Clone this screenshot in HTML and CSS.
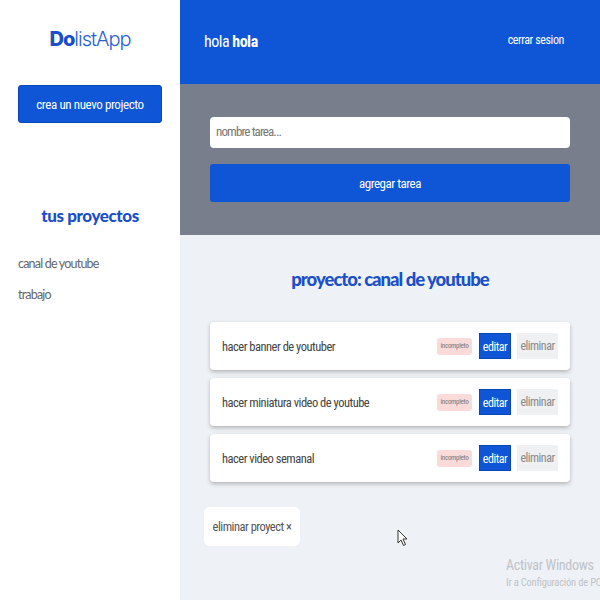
FILE: index.html
```html
<!DOCTYPE html>
<html>
<head>
<meta charset="utf-8">
<link rel="stylesheet" href="styles.css">
</head>
<body>
<div class="app">
  <aside class="sidebar">
    <h1 class="logo"><span class="logo-do">Do</span><span class="logo-rest">listApp</span></h1>
    <button class="btn-new">crea un nuevo projecto</button>
    <h2 class="side-title">tus proyectos</h2>
    <ul class="proj-list">
      <li>canal de youtube</li>
      <li>trabajo</li>
    </ul>
  </aside>
  <main class="main">
    <header class="topbar">
      <div class="hello">hola <b>hola</b></div>
      <div class="logout">cerrar sesion</div>
    </header>
    <section class="form-area">
      <div class="input">nombre tarea...</div>
      <button class="btn-add">agregar tarea</button>
    </section>
    <section class="content">
      <h2 class="proj-title">proyecto: canal de youtube</h2>
      <ul class="tasks">
        <li class="task"><span class="task-name">hacer banner de youtuber</span><span class="actions"><span class="badge">incompleto</span><span class="btn-edit">editar</span><span class="btn-del">eliminar</span></span></li>
        <li class="task"><span class="task-name">hacer miniatura video de youtube</span><span class="actions"><span class="badge">incompleto</span><span class="btn-edit">editar</span><span class="btn-del">eliminar</span></span></li>
        <li class="task"><span class="task-name">hacer video semanal</span><span class="actions"><span class="badge">incompleto</span><span class="btn-edit">editar</span><span class="btn-del">eliminar</span></span></li>
      </ul>
      <button class="btn-delproj">eliminar proyect &times;</button>
      <div class="watermark"><div class="wm1">Activar Windows</div><div class="wm2">Ir a Configuración de PC</div></div>
      <svg class="cursor" width="12" height="18" viewBox="0 0 12 18"><path d="M1 1 L1 14 L4 11 L6.5 16.5 L8.5 15.5 L6 10 L10 10 Z" fill="#fff" stroke="#333" stroke-width="1"/></svg>
    </section>
  </main>
</div>
</body>
</html>
```
FILE: styles.css
```css
* { box-sizing: border-box; margin: 0; padding: 0; }
body { width: 600px; height: 600px; overflow: hidden; font-family: Roboto, "Liberation Sans", sans-serif; font-stretch: 82%; background: #eef2f6; }
button { font-stretch: 82%; }
.app { display: flex; height: 600px; }
.sidebar { width: 180px; background: #fff; display: flex; flex-direction: column; padding: 0 18px; }
.logo { font-family: Inter, "Open Sans", sans-serif; font-size: 20px; text-align: center; margin-top: 26px; height: 26px; line-height: 26px; letter-spacing: -1px; }
.logo-do { font-weight: 800; color: #1a4fc9; }
.logo-rest { font-weight: 300; color: #2a5ed8; }
.btn-new { margin-top: 33px; height: 38px; width: 144px; background: #0e56d6; color: #fff; border: 1px solid #0a46b8; border-radius: 3px; font-family: Roboto, sans-serif; font-size: 13px; letter-spacing: -0.4px; }
.side-title { font-family: Lato, sans-serif; font-weight: 900; font-size: 17px; color: #1a4fc9; text-align: center; margin-top: 82px; letter-spacing: -0.4px; }
.proj-list { list-style: none; margin-top: 30px; }
.proj-list li { font-family: Lato, sans-serif; font-weight: 400; font-size: 12.5px; color: #666; letter-spacing: -0.8px; height: 31px; }
.main { flex: 1; display: flex; flex-direction: column; }
.topbar { height: 84px; background: #0e56d6; display: flex; justify-content: space-between; padding: 32px 36px 0 24px; color: #fff; }
.hello { font-size: 16px; letter-spacing: -0.5px; }
.hello b { font-weight: 700; }
.logout { font-size: 12px; letter-spacing: -0.4px; margin-top: 1px; }
.form-area { height: 151px; background: #797e8c; padding: 33px 30px 0 30px; display: flex; flex-direction: column; gap: 16px; }
.input { height: 31px; background: #fff; border-radius: 4px; font-size: 13px; color: #777; letter-spacing: -0.9px; padding: 7px 6px; }
.btn-add { height: 38px; background: #0e56d6; color: #fff; border: none; border-radius: 3px; font-family: Roboto, sans-serif; font-size: 13px; letter-spacing: -0.5px; }
.content { flex: 1; position: relative; padding: 0 30px; }
.proj-title { font-family: Lato, sans-serif; font-weight: 900; font-size: 18.5px; color: #1a4fc9; text-align: center; margin-top: 33px; height: 22px; line-height: 22px; letter-spacing: -1px; }
.tasks { list-style: none; margin-top: 32px; display: flex; flex-direction: column; gap: 8px; }
.task { height: 48px; background: #fff; border-radius: 4px; box-shadow: 0 2px 4px rgba(0,0,0,0.25); display: flex; align-items: center; justify-content: space-between; padding: 0 12px; }
.task-name { font-size: 12.5px; color: #444; letter-spacing: -0.5px; }
.actions { display: flex; align-items: center; gap: 6px; }
.badge { background: #fbdada; color: #777; font-size: 7px; height: 17px; line-height: 17px; padding: 0 3px; border-radius: 3px; width: 35px; text-align: center; letter-spacing: -0.3px; margin-right: 1px; }
.btn-edit { background: #0e56d6; color: #fff; font-size: 12px; height: 26px; line-height: 26px; width: 32px; text-align: center; letter-spacing: -0.5px; border: 1px solid #0a46b8; }
.btn-del { background: #eef0f2; color: #888; font-size: 12px; height: 26px; line-height: 26px; width: 41px; text-align: center; letter-spacing: -0.5px; }
.btn-delproj { margin-top: 25px; margin-left: -6px; height: 39px; width: 96px; background: #fff; border: none; border-radius: 6px; font-family: Roboto, sans-serif; font-size: 12.5px; color: #555; letter-spacing: -0.5px; }
.watermark { position: absolute; left: 326px; top: 322px; color: #bfc3c8; white-space: nowrap; }
.wm1 { font-size: 14px; letter-spacing: -0.3px; }
.wm2 { font-size: 10.5px; margin-top: 3px; letter-spacing: -0.2px; }
.cursor { position: absolute; left: 217px; top: 294px; }
```
